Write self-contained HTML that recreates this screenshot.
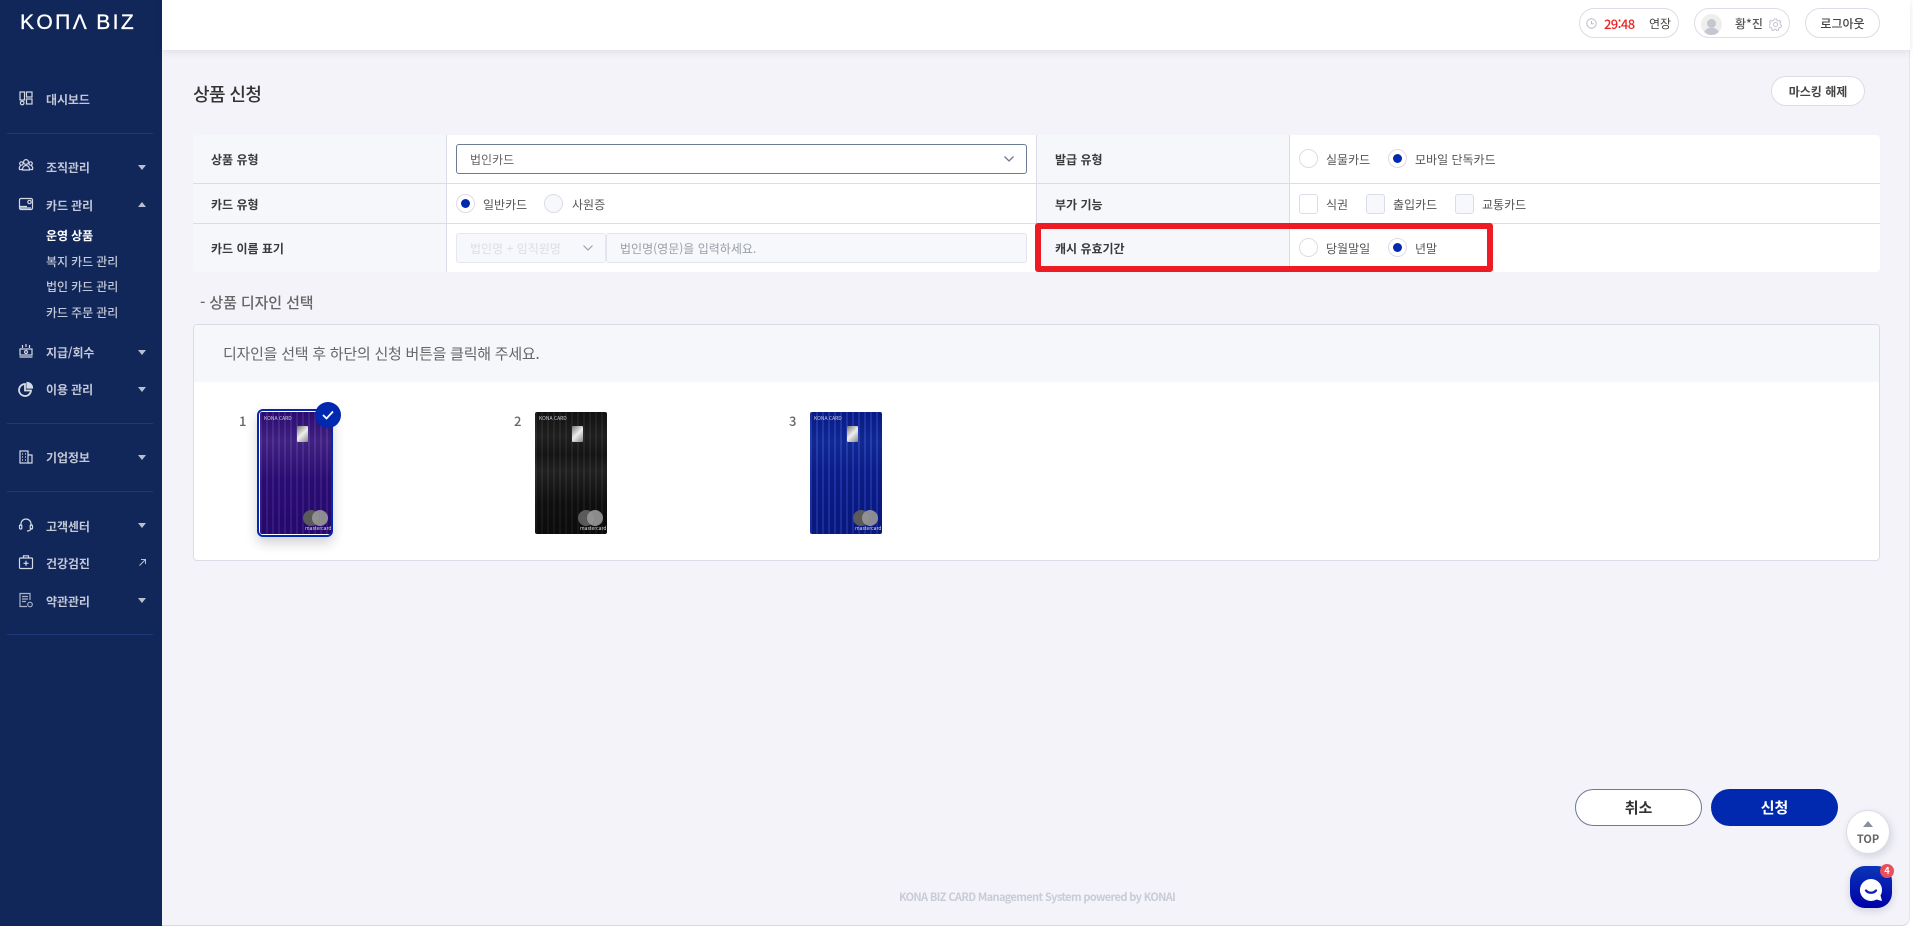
<!DOCTYPE html>
<html lang="ko"><head><meta charset="utf-8"><title>KONA BIZ</title>
<style>
*{box-sizing:border-box;margin:0;padding:0}
html,body{width:1913px;height:927px;overflow:hidden;background:#fff}
body{font-family:"Noto Sans CJK KR","Liberation Sans",sans-serif;position:relative;color:#333}
.a{position:absolute}
.t{position:absolute;white-space:nowrap;line-height:20px;height:20px;font-size:12px;transform:translateY(1px)}
#main{left:0;top:0;width:1910px;height:926px;background:#f3f3f9;border-bottom:1px solid #d8d8de;border-right:1px solid #e4e4ea;border-bottom-right-radius:8px}
#side{left:0;top:0;width:162px;height:926px;background:#112659}
#head{left:162px;top:0;width:1748px;height:50px;background:#fff;box-shadow:0 2px 8px rgba(40,40,80,.1)}
.m{color:#c3c8d6;font-weight:700;left:46px;letter-spacing:-.1px}
.d{left:7px;width:146px;height:1px;background:#1e3a7a}
.c{left:138px;width:0;height:0;border-left:4px solid transparent;border-right:4px solid transparent;border-top:5px solid #b9bfce}
.up{border-top:0;border-bottom:5px solid #b9bfce}
.ic{position:absolute;left:18px;width:16px;height:16px;fill:none;stroke:#d5d9e4;stroke-width:1.2}
.pill{position:absolute;background:#fff;border:1px solid #dcdce8;border-radius:16px}
.lb{font-weight:700;color:#3a3a3a;font-size:12px}
.v{color:#555}
.r{position:absolute;width:19px;height:19px;border-radius:50%;border:1px solid #dcdce8;background:#fff}
.r.on:after{content:"";position:absolute;left:4px;top:4px;width:9px;height:9px;border-radius:50%;background:#0029b0}
.cb{position:absolute;width:19px;height:20px;border-radius:3px;border:1px solid #dcdce8;background:#fff}
.dis{background:#f7f8fb}
.card{position:absolute;width:72px;height:122px;border-radius:2px;overflow:hidden;filter:blur(.3px)}
.chip{position:absolute;left:37px;top:14px;width:11px;height:16px;border-radius:1px;background:linear-gradient(135deg,#777,#eee 50%,#888)}
.c1,.c2{position:absolute;top:98px;width:16px;height:16px;border-radius:50%}
.c1{left:43px;background:#5a5a5a}
.c2{left:52px;background:rgba(150,150,150,.92)}
.kc{position:absolute;left:4px;top:3px;font-size:5px;line-height:7px;color:#cfcfd8;white-space:nowrap}
.mc{position:absolute;left:45px;top:113px;font-size:5px;line-height:7px;color:#ddd;white-space:nowrap}
.num{color:#666;font-size:13px;font-weight:500}
</style></head><body>
<div id="main" class="a"></div>
<div id="side" class="a"></div>
<div id="head" class="a"></div>

<div class="a" style="left:20px;top:10px;font:400 21px/26px 'Liberation Sans',sans-serif;color:#fff;letter-spacing:2.4px;-webkit-text-stroke:.3px #fff;white-space:nowrap">KOΠΛ BIZ</div>

<svg class="ic" style="top:90px" viewBox="0 0 16 16"><rect x="2" y="2" width="4.5" height="8"/><circle cx="4.2" cy="13" r="1.8"/><rect x="8.5" y="2" width="5.5" height="5"/><rect x="8.5" y="9" width="5.5" height="5"/></svg>
<div class="t m" style="top:89px">대시보드</div>
<div class="a d" style="top:133px"></div>

<svg class="ic" style="top:157px" viewBox="0 0 16 16"><circle cx="8" cy="5" r="2.4"/><circle cx="3.4" cy="6.5" r="1.7"/><circle cx="12.6" cy="6.5" r="1.7"/><path d="M4.5 13c0-3 1.5-4.5 3.5-4.5s3.500 1.500 3.500 4.500zM4 12.500H1.500c-.8-2 .2-3.500 1.500-3.800M12 12.500h2.500c.8-2-.2-3.500-1.500-3.800"/></svg>
<div class="t m" style="top:157px">조직관리</div><div class="a c" style="top:165px"></div>

<svg class="ic" style="top:196px" viewBox="0 0 16 16"><rect x="1.500" y="2.500" width="13" height="11" rx="1.500"/><path d="M2 10.500h7M2 12h11" /><circle cx="11.500" cy="6" r="1.700"/></svg>
<div class="t m" style="top:195px">카드 관리</div><div class="a c up" style="top:202px"></div>
<div class="t" style="left:46px;top:225px;color:#fff;font-weight:700;letter-spacing:-.1px">운영 상품</div>
<div class="t m" style="top:251px;font-weight:500">복지 카드 관리</div>
<div class="t m" style="top:276px;font-weight:500">법인 카드 관리</div>
<div class="t m" style="top:302px;font-weight:500">카드 주문 관리</div>

<svg class="ic" style="top:343px" viewBox="0 0 16 16"><rect x="2" y="6" width="12" height="6"/><path d="M1.500 14h13M8 1v3M4.500 2v3M11.500 2v3"/><circle cx="8" cy="9" r="1.500"/></svg>
<div class="t m" style="top:342px">지급/회수</div><div class="a c" style="top:350px"></div>

<svg class="ic" style="top:381px" viewBox="0 0 16 16"><path d="M7 3a6 6 0 1 0 6 6.500H7z" stroke-width="1.800"/><path d="M9 1.500a5.500 5.500 0 0 1 5.500 5.500H9z" fill="#d5d9e4"/></svg>
<div class="t m" style="top:379px">이용 관리</div><div class="a c" style="top:387px"></div>
<div class="a d" style="top:423px"></div>

<svg class="ic" style="top:449px" viewBox="0 0 16 16"><rect x="2" y="2" width="8" height="12"/><path d="M10 6h4v8h-4M4 5h1M7 5h1M4 8h1M7 8h1M4 11h1M7 11h1"/></svg>
<div class="t m" style="top:447px">기업정보</div><div class="a c" style="top:455px"></div>
<div class="a d" style="top:491px"></div>

<svg class="ic" style="top:517px" viewBox="0 0 16 16"><path d="M3 9V7a5 5 0 0 1 10 0v2M13 11c0 2-1.500 3-4 3"/><rect x="1.500" y="8" width="2.300" height="4" rx="1"/><rect x="12.200" y="8" width="2.300" height="4" rx="1"/></svg>
<div class="t m" style="top:516px">고객센터</div><div class="a c" style="top:523px"></div>

<svg class="ic" style="top:554px" viewBox="0 0 16 16"><rect x="1.500" y="4" width="13" height="10.500" rx="1"/><path d="M5.500 4V1.800h5V4M8 6.800v5M5.500 9.300h5"/></svg>
<div class="t m" style="top:553px">건강검진</div>
<svg class="a" style="left:138px;top:558px;width:9px;height:9px" viewBox="0 0 9 9" fill="none" stroke="#b9bfce" stroke-width="1"><path d="M1.500 7.500 7.500 1.500M3 1.500h4.500V6"/></svg>

<svg class="ic" style="top:592px" viewBox="0 0 16 16"><path d="M12 8V1.500H2v13h7M4 4.500h6M4 7h6M4 9.500h4" stroke="#aab2c6"/><circle cx="12" cy="12.500" r="2.300" stroke="#aab2c6"/></svg>
<div class="t m" style="top:591px">약관관리</div><div class="a c" style="top:598px"></div>
<div class="a d" style="top:634px"></div>

<!-- header -->
<div class="pill" style="left:1579px;top:8px;width:100px;height:30px;border-radius:15px"></div>
<svg class="a" style="left:1586px;top:18px;width:11px;height:11px" viewBox="0 0 11 11" fill="none" stroke="#b8bcc8"><circle cx="5.500" cy="5.500" r="4.700"/><path d="M5.500 3v2.800h2.200"/></svg>
<div class="t" style="left:1604px;top:13px;color:#f02020;font-size:13px;font-weight:500;letter-spacing:-.6px">29:48</div>
<div class="t" style="left:1649px;top:13px;color:#444">연장</div>
<div class="pill" style="left:1694px;top:8px;width:96px;height:30px;border-radius:15px"></div>
<div class="a" style="left:1701px;top:14px;width:21px;height:21px;border-radius:50%;background:#eee;overflow:hidden">
 <div class="a" style="left:6px;top:5px;width:9px;height:9px;border-radius:50%;background:#c4c6d0"></div>
 <div class="a" style="left:3px;top:14px;width:15px;height:10px;border-radius:6px 6px 0 0;background:#c4c6d0"></div>
</div>
<div class="t" style="left:1735px;top:13px;color:#555;font-weight:500">황*진</div>
<svg class="a" style="left:1769px;top:18px;width:13px;height:13px" viewBox="0 0 13 13" fill="none" stroke="#c2c5d0" stroke-width="1"><circle cx="6.500" cy="6.500" r="2"/><path d="M5.500 1h2l.4 1.500 1.400.6 1.400-.7 1.100 1.400-.8 1.300.3 1.500 1.200.9-.5 1.800-1.500.1-1 1.100.1 1.500-1.800.5-.9-1.200h-1.500l-.9 1.200-1.800-.5.1-1.500-1-1.100-1.500-.1-.5-1.800 1.200-.9.300-1.500-.8-1.300 1.100-1.400 1.400.7 1.400-.6z"/></svg>
<div class="pill" style="left:1805px;top:8px;width:75px;height:30px;border-radius:15px"></div>
<div class="t" style="left:1805px;width:75px;text-align:center;top:13px;color:#444;font-weight:500">로그아웃</div>

<!-- title -->
<div class="t" style="left:193px;top:83px;font-size:18px;font-weight:500;color:#333;letter-spacing:-.6px">상품 신청</div>
<div class="pill" style="left:1771px;top:76px;width:94px;height:30px;border-radius:15px"></div>
<div class="t" style="left:1771px;width:94px;text-align:center;top:81px;color:#444;font-weight:700">마스킹 해제</div>

<!-- table -->
<div class="a" style="left:193px;top:135px;width:1687px;height:137px;background:#fff;border-radius:4px;overflow:hidden">
 <div class="a" style="left:0;top:0;width:253px;height:137px;background:#f6f7fa"></div>
 <div class="a" style="left:844px;top:0;width:252px;height:137px;background:#f6f7fa"></div>
 <div class="a" style="left:253px;top:0;width:1px;height:137px;background:#dcdce8"></div>
 <div class="a" style="left:843px;top:0;width:1px;height:137px;background:#dcdce8"></div>
 <div class="a" style="left:1096px;top:0;width:1px;height:137px;background:#dcdce8"></div>
 <div class="a" style="left:0;top:48px;width:1687px;height:1px;background:#dcdce8"></div>
 <div class="a" style="left:0;top:88px;width:1687px;height:1px;background:#dcdce8"></div>
</div>
<div class="t lb" style="left:211px;top:149px">상품 유형</div>
<div class="t lb" style="left:211px;top:194px">카드 유형</div>
<div class="t lb" style="left:211px;top:238px">카드 이름 표기</div>
<div class="t lb" style="left:1055px;top:149px">발급 유형</div>
<div class="t lb" style="left:1055px;top:194px">부가 기능</div>
<div class="t lb" style="left:1055px;top:238px">캐시 유효기간</div>

<div class="a" style="left:456px;top:144px;width:571px;height:30px;border:1px solid #6c7a94;border-radius:3px;background:#fff"></div>
<div class="t v" style="left:470px;top:149px;color:#666">법인카드</div>
<svg class="a" style="left:1003px;top:155px;width:12px;height:8px" viewBox="0 0 12 8" fill="none" stroke="#6c7a94" stroke-width="1.300"><path d="M1.500 1.500 6 6l4.500-4.500"/></svg>

<div class="r on" style="left:456px;top:194px"></div><div class="t v" style="left:483px;top:194px">일반카드</div>
<div class="r dis" style="left:544px;top:194px"></div><div class="t v" style="left:572px;top:194px">사원증</div>

<div class="a dis" style="left:456px;top:233px;width:150px;height:30px;border:1px solid #e6e7f0;border-radius:3px"></div>
<div class="t" style="left:470px;top:238px;color:#e0e2ea;font-weight:500">법인명 + 임직원명</div>
<svg class="a" style="left:582px;top:244px;width:12px;height:8px" viewBox="0 0 12 8" fill="none" stroke="#9aa2b4" stroke-width="1.200"><path d="M1.500 1.500 6 6l4.500-4.500"/></svg>
<div class="a dis" style="left:606px;top:233px;width:421px;height:30px;border:1px solid #e3e4ee;border-radius:3px"></div>
<div class="t" style="left:620px;top:238px;color:#9a9da8">법인명(영문)을 입력하세요.</div>

<div class="r" style="left:1299px;top:149px"></div><div class="t v" style="left:1326px;top:149px">실물카드</div>
<div class="r on" style="left:1388px;top:149px"></div><div class="t v" style="left:1415px;top:149px">모바일 단독카드</div>

<div class="cb" style="left:1299px;top:194px"></div><div class="t v" style="left:1326px;top:194px">식권</div>
<div class="cb dis" style="left:1366px;top:194px"></div><div class="t v" style="left:1393px;top:194px">출입카드</div>
<div class="cb dis" style="left:1455px;top:194px"></div><div class="t v" style="left:1482px;top:194px">교통카드</div>

<div class="r" style="left:1299px;top:238px"></div><div class="t v" style="left:1326px;top:238px">당월말일</div>
<div class="r on" style="left:1388px;top:238px"></div><div class="t v" style="left:1415px;top:238px">년말</div>

<div class="a" style="left:1035px;top:223px;width:458px;height:49px;border:6px solid #ed1c24;border-radius:3px"></div>

<!-- design section -->
<div class="t" style="left:200px;top:292px;font-size:15px;font-weight:500;color:#666;letter-spacing:-.1px">- 상품 디자인 선택</div>
<div class="a" style="left:193px;top:324px;width:1687px;height:237px;background:#fff;border:1px solid #dcdce8;border-radius:4px;overflow:hidden">
 <div class="a" style="left:0;top:0;width:1687px;height:57px;background:#f6f7fa"></div>
</div>
<div class="t" style="left:223px;top:343px;font-size:15px;color:#666;letter-spacing:-.24px">디자인을 선택 후 하단의 신청 버튼을 클릭해 주세요.</div>

<div class="t num" style="left:239px;top:410px">1</div>
<div class="t num" style="left:514px;top:410px">2</div>
<div class="t num" style="left:789px;top:410px">3</div>

<div class="a" style="left:257px;top:409px;width:76px;height:128px;border:2px solid #0029b0;border-radius:6px;background:#fff;box-shadow:0 6px 12px rgba(30,30,60,.2)"></div>
<div class="card" style="left:260px;top:412px;width:71px;background:repeating-linear-gradient(90deg,rgba(255,255,255,.06) 0 2px,rgba(0,0,0,.12) 2px 6px),linear-gradient(180deg,#300d7c 0,#47268f 24%,#2f0e7e 55%,#2a0a78 100%)">
 <div class="kc">KONA CARD</div><div class="chip"></div><div class="c1"></div><div class="c2"></div><div class="mc">mastercard</div></div>
<div class="a" style="left:315px;top:402px;width:26px;height:26px;border-radius:50%;background:#0029b0"></div>
<svg class="a" style="left:321px;top:409px;width:14px;height:12px" viewBox="0 0 14 12" fill="none" stroke="#fff" stroke-width="1.800"><path d="M2 6l3.500 3.500L12 2.500"/></svg>

<div class="card" style="left:535px;top:412px;background:repeating-linear-gradient(90deg,rgba(255,255,255,.04) 0 2px,rgba(0,0,0,.15) 2px 6px),linear-gradient(180deg,#141414 0,#242424 20%,#171717 35%,#262626 48%,#111 75%,#0d0d0d 100%)">
 <div class="kc">KONA CARD</div><div class="chip"></div><div class="c1"></div><div class="c2"></div><div class="mc">mastercard</div></div>

<div class="card" style="left:810px;top:412px;background:repeating-linear-gradient(90deg,rgba(255,255,255,.07) 0 2px,rgba(0,0,0,.16) 2px 6px),linear-gradient(180deg,#0a1f9c 0,#1330aa 25%,#0c219f 50%,#0a1c92 100%)">
 <div class="kc">KONA CARD</div><div class="chip"></div><div class="c1"></div><div class="c2"></div><div class="mc">mastercard</div></div>

<!-- buttons -->
<div class="a" style="left:1575px;top:789px;width:127px;height:37px;background:#fff;border:1px solid #6c7a94;border-radius:19px"></div>
<div class="t" style="left:1575px;width:127px;text-align:center;top:797px;font-size:15px;font-weight:700;color:#333">취소</div>
<div class="a" style="left:1711px;top:789px;width:127px;height:37px;background:#0029b0;border-radius:19px"></div>
<div class="t" style="left:1711px;width:127px;text-align:center;top:797px;font-size:15px;font-weight:700;color:#fff">신청</div>

<div class="a" style="left:1846px;top:810px;width:44px;height:44px;border-radius:50%;background:#fff;border:1px solid #dcdce8;box-shadow:2px 3px 8px rgba(40,40,80,.15)"></div>
<div class="a" style="left:1863px;top:821px;width:0;height:0;border-left:5px solid transparent;border-right:5px solid transparent;border-bottom:6px solid #8a8f9e"></div>
<div class="t" style="left:1846px;width:44px;text-align:center;top:828px;font-size:11px;font-weight:700;color:#666">TOP</div>

<div class="a" style="left:1850px;top:866px;width:42px;height:42px;border-radius:15px;background:linear-gradient(180deg,#0a35b8,#0000a8);box-shadow:0 3px 8px rgba(30,30,80,.15)"></div>
<svg class="a" style="left:1859px;top:878px;width:24px;height:24px" viewBox="0 0 24 24"><path d="M12 1a11 11 0 1 0 5.500 20.500L23 23l-1.500-5.500A11 11 0 0 0 12 1z" fill="#fff"/><path d="M7 12.500c2.500 3 7.500 3 10 0" fill="none" stroke="#0a1fb0" stroke-width="2.200" stroke-linecap="round"/></svg>
<div class="a" style="left:1880px;top:864px;width:14px;height:14px;border-radius:50%;background:#e8505b;color:#fff;font-size:9px;line-height:14px;text-align:center;font-weight:700">4</div>

<div class="t" style="left:899px;top:886px;font-size:11px;font-weight:700;color:#c9ccd6;letter-spacing:-.63px">KONA BIZ CARD Management System powered by KONAI</div>
</body></html>
